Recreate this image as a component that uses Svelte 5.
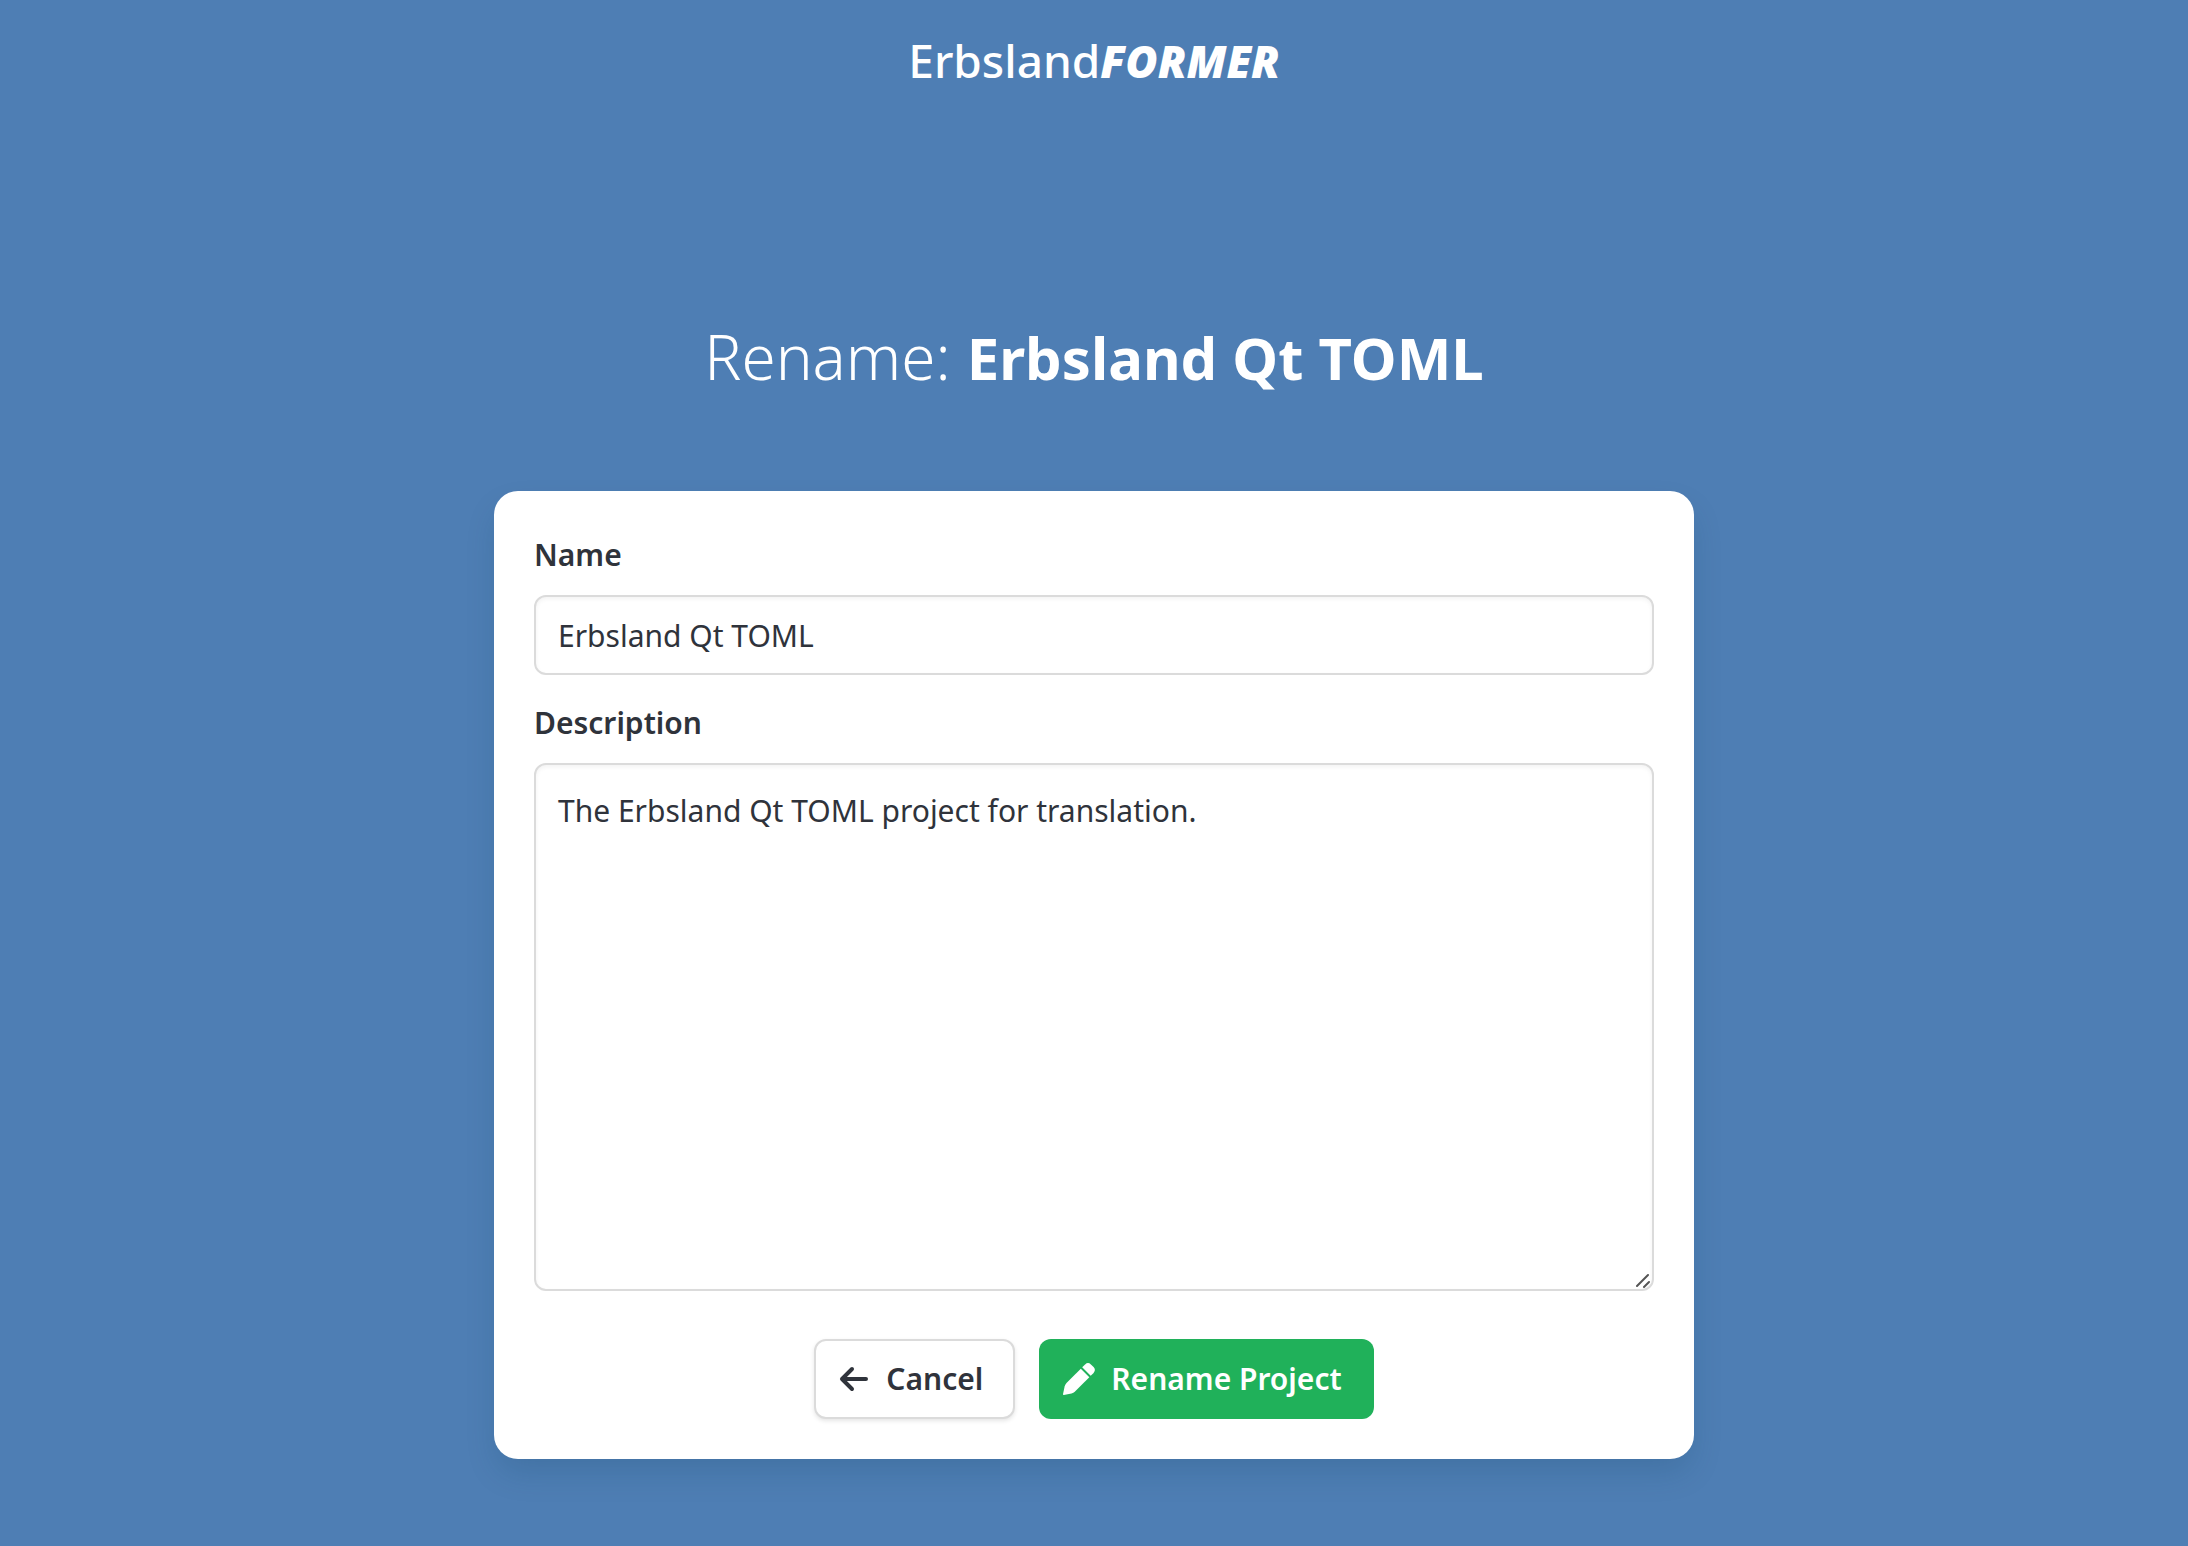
<script>
  let name = $state('Erbsland Qt TOML');
  let description = $state('The Erbsland Qt TOML project for translation.');
</script>

<div class="page">
  <header>
    <a class="logo" href="/">Erbsland<em>FORMER</em></a>
  </header>

  <main>
    <h1>Rename: <strong>Erbsland Qt TOML</strong></h1>

    <form class="card" onsubmit={(e) => e.preventDefault()}>
      <div class="field">
        <label for="name">Name</label>
        <input id="name" type="text" bind:value={name} />
      </div>
      <div class="field">
        <label for="description">Description</label>
        <div class="area">
          <textarea id="description" bind:value={description}></textarea>
          <svg class="grip" viewBox="0 0 16 16" aria-hidden="true">
            <path d="M1 13 12 2M8 14l5-5" />
          </svg>
        </div>
      </div>
      <div class="actions">
        <button class="cancel" type="button">
          <svg viewBox="0 0 32 32" aria-hidden="true">
            <path class="arrow" d="M28 16H4M14 6 4 16l10 10" />
          </svg>
          Cancel
        </button>
        <button class="submit" type="submit">
          <svg viewBox="0 0 32 32" aria-hidden="true">
            <path d="M17.8 5.700 26.300 14.200 12 28.500Q10.500 29.900 8.500 30.400L.8 32Q-.1 32 0 31.200L1.600 23.500Q2.100 21.500 3.500 20Z" />
            <path d="M19.200 4.300 22.100 1.400Q25-1.200 27.900 1.400L30.600 4.100Q33.200 7 30.600 9.900L27.700 12.800Z" />
          </svg>
          Rename Project
        </button>
      </div>
    </form>
  </main>
</div>

<style>
  :global(body) {
    margin: 0;
    background: #4e7eb4;
  }

  .page {
    box-sizing: border-box;
    min-height: 100vh;
    padding: 24px 24px 88px;
    font-family: 'Noto Sans', 'Open Sans', sans-serif;
    font-size: 30px;
    line-height: 48px;
    color: #2f333b;
  }

  header {
    display: flex;
    justify-content: center;
  }

  .logo {
    font-size: 46px;
    line-height: 72px;
    font-weight: 500;
    color: #fff;
    text-decoration: none;
  }

  .logo em {
    font-size: 44px;
    font-weight: 900;
  }

  h1 {
    margin: 222px 0 96px;
    font-size: 62px;
    line-height: 74px;
    font-weight: 350;
    text-align: center;
    color: #fff;
  }

  h1 strong {
    font-size: 58px;
    font-weight: 700;
  }

  .card {
    box-sizing: border-box;
    display: flex;
    flex-direction: column;
    gap: 24px;
    max-width: 1200px;
    margin: 0 auto;
    padding: 40px;
    border-radius: 24px;
    background: #fff;
    box-shadow: 0 16px 32px -4px rgba(10, 60, 90, 0.18);
  }

  .field {
    display: flex;
    flex-direction: column;
    gap: 16px;
  }

  label {
    font-weight: 600;
  }

  input,
  textarea {
    box-sizing: border-box;
    display: block;
    width: 100%;
    margin: 0;
    border: 2px solid #dbdbdb;
    border-radius: 12px;
    background: #fff;
    box-shadow: inset 0 2px 4px rgba(10, 10, 10, 0.05);
    font: inherit;
    color: inherit;
  }

  input {
    height: 80px;
    padding: 0 22px;
  }

  textarea {
    height: 528px;
    padding: 22px;
    resize: none;
  }

  .area {
    position: relative;
  }

  .grip {
    position: absolute;
    right: 2px;
    bottom: 2px;
    width: 16px;
    height: 16px;
    fill: none;
    stroke: #555;
    stroke-width: 2;
    stroke-linecap: round;
  }

  .actions {
    display: flex;
    flex-wrap: wrap;
    justify-content: center;
    gap: 24px;
    padding-top: 24px;
  }

  button {
    display: flex;
    align-items: center;
    gap: 16px;
    height: 80px;
    padding: 0 32px 0 24px;
    border: 0;
    border-radius: 12px;
    font: inherit;
    font-weight: 600;
    cursor: pointer;
  }

  button svg {
    width: 32px;
    height: 32px;
    fill: currentColor;
    overflow: visible;
  }

  .cancel {
    padding: 0 30px 0 22px;
    border: 2px solid #dbdbdb;
    background: #fff;
    color: #2f333b;
    box-shadow: 0 2px 4px rgba(10, 10, 10, 0.1);
  }

  .arrow {
    fill: none;
    stroke: currentColor;
    stroke-width: 4;
    stroke-linecap: round;
    stroke-linejoin: round;
  }

  .submit {
    background: #20b15a;
    color: #fff;
  }
</style>
